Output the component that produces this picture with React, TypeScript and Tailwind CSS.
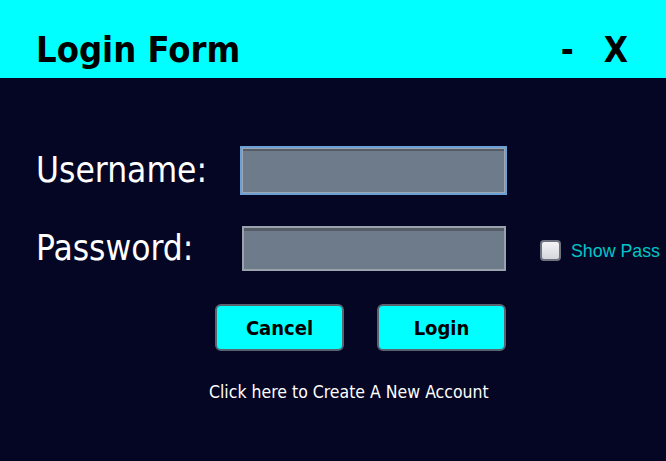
import { useState } from 'react'

const TAHOMA = "font-['DejaVu_Sans_Condensed','DejaVu_Sans',sans-serif]"

export default function App() {
  const [showPass, setShowPass] = useState(false)

  return (
    <div className="flex h-[461px] w-[666px] flex-col overflow-hidden bg-[#050524]">
      <header
        className={`flex h-[78px] shrink-0 items-center justify-between bg-[#00ffff] pl-[36px] pr-[38px] pt-[22px] text-black ${TAHOMA}`}
      >
        <h1 className="text-[36px] font-bold leading-none">Login Form</h1>
        <div className="flex items-center gap-[30px] text-[35px] font-bold leading-none">
          <span>-</span>
          <span>X</span>
        </div>
      </header>

      <main className={`flex flex-col pt-[68px] ${TAHOMA}`}>
        <div className="flex items-center">
          <label className="w-[240px] shrink-0 pl-[36px] text-[35px] leading-none text-white">Username:</label>
          <input
            type="text"
            className="h-[49px] w-[267px] border-2 border-[#6c9fd6] bg-[#6e7b8b] shadow-[inset_0_0_0_1px_#9aa6b2,inset_0_3px_0_0_#555c66] outline-none"
          />
        </div>

        <div className="mt-[31px] flex items-center">
          <label className="w-[242px] shrink-0 pl-[36px] text-[35px] leading-none text-white">Password:</label>
          <input
            type={showPass ? 'text' : 'password'}
            className="h-[45px] w-[264px] border-2 border-[#9aa2ab] bg-[#6e7b8b] shadow-[inset_0_3px_0_0_#555c66] outline-none"
          />
          <label className="ml-[34px] flex cursor-pointer items-center gap-[10px] pt-[3px]">
            <input
              type="checkbox"
              checked={showPass}
              onChange={(e) => setShowPass(e.target.checked)}
              className="h-[21px] w-[21px] shrink-0 appearance-none rounded-[4px] border-2 border-[#6f7380] bg-gradient-to-b from-[#f4f4f6] to-[#d4d6dc]"
            />
            <span className="mt-[3px] whitespace-nowrap font-['Liberation_Sans',Arial,sans-serif] text-[17.8px] text-[#00c6c8]">
              Show Pass
            </span>
          </label>
        </div>

        <div className="mt-[33px] flex gap-[33px] pl-[215px]">
          <button className="h-[47px] w-[129px] rounded-[6px] border-2 border-[#5a6470] bg-[#00ffff] text-[20px] font-bold text-black">
            Cancel
          </button>
          <button className="h-[47px] w-[129px] rounded-[6px] border-2 border-[#5a6470] bg-[#00ffff] text-[20px] font-bold text-black">
            Login
          </button>
        </div>

        <a className="mt-[33px] self-start pl-[209px] text-[17.5px] leading-none text-white" href="#">
          Click here to Create A New Account
        </a>
      </main>
    </div>
  )
}
